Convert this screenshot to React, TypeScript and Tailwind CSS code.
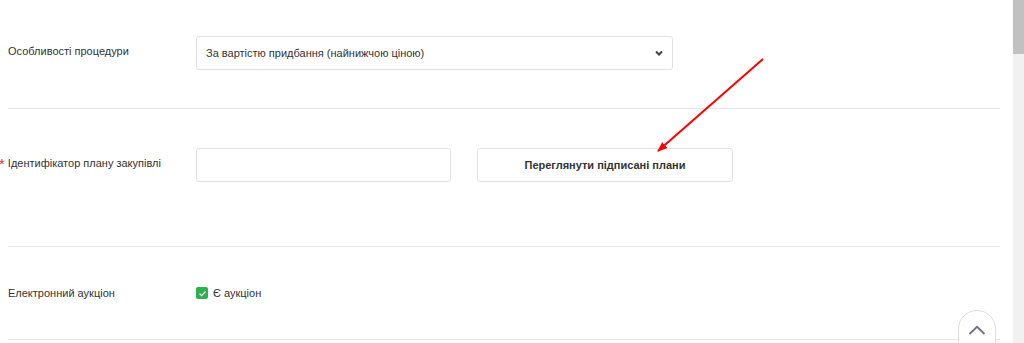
const Label = ({ children, required }: { children: React.ReactNode; required?: boolean }) => {
    return (
        <div className="w-[188px] shrink-0 pt-[6px] text-[11px] leading-[18px] text-[#333]">
            {required && <span className="-ml-[9px] mr-[3px] align-[-2px] text-[15px] leading-[0] text-[#e3342f]">*</span>}
            {children}
        </div>
    );
};

export default function App() {
    return (
        <div
            className="relative flex h-[343px] w-[1024px] overflow-hidden bg-white"
            style={{ fontFamily: '"Liberation Sans", Arial, sans-serif' }}
        >
            <div className="flex-1 pl-2 pr-[13px]">
                {/* row 1 */}
                <div className="flex items-start border-b border-[#e6e6e9] pt-[36px] pb-[38px]">
                    <Label>Особливості процедури</Label>
                    <div className="flex h-[34px] w-[477px] items-center justify-between rounded-[3px] border border-[#e1e2e6] pl-[9px] pr-[8px] text-[11px] text-[#333]">
                        <span>За вартістю придбання (найнижчою ціною)</span>
                        <svg width="10" height="8" viewBox="0 0 10 8">
                            <path d="M2 2.5 L5 5.5 L8 2.5" fill="none" stroke="#444" strokeWidth="2" />
                        </svg>
                    </div>
                </div>

                {/* row 2 */}
                <div className="flex items-start border-b border-[#e6e6e9] pt-[39px] pb-[64px]">
                    <Label required>Ідентифікатор плану закупівлі</Label>
                    <div className="flex gap-[26px]">
                        <div className="h-[34px] w-[255px] rounded-[3px] border border-[#e1e2e6]" />
                        <button className="h-[34px] w-[256px] rounded-[3px] border border-[#e1e2e6] bg-white text-[11px] font-bold text-[#333]">
                            Переглянути підписані плани
                        </button>
                    </div>
                </div>

                {/* row 3 */}
                <div className="flex h-[93px] items-center border-b border-[#e6e6e9]">
                    <div className="w-[188px] shrink-0 text-[11px] leading-[18px] text-[#333]">Електронний аукціон</div>
                    <div className="flex items-center gap-[5px] text-[11px] text-[#333]">
                        <span className="flex h-[12px] w-[12px] items-center justify-center rounded-[2px] bg-[#2bb24c]">
                            <svg width="9" height="9" viewBox="0 0 10 10">
                                <path d="M1.8 5.2 L4 7.3 L8.3 2.8" fill="none" stroke="white" strokeWidth="1.4" />
                            </svg>
                        </span>
                        <span>Є аукціон</span>
                    </div>
                </div>
            </div>

            {/* scrollbar */}
            <div className="w-[11px] bg-[#f1f1f1]">
                <div className="h-[54px] bg-[#c1c1c1]" />
            </div>

            {/* annotation arrow */}
            <svg className="pointer-events-none absolute left-0 top-0" width="1024" height="343">
                <defs>
                    <marker id="head" markerWidth="10" markerHeight="8" refX="9" refY="4" orient="auto" markerUnits="userSpaceOnUse">
                        <path d="M0 0 L10 4 L0 8 Z" fill="#ff0000" />
                    </marker>
                </defs>
                <line x1="763" y1="59" x2="658" y2="151" stroke="#ff0000" strokeWidth="2" markerEnd="url(#head)" />
            </svg>

            {/* scroll to top */}
            <div className="absolute left-[958px] top-[310px] flex h-[60px] w-[38px] justify-center rounded-[19px] border border-[#dcdde2] bg-white pt-[14px]">
                <svg width="18" height="10" viewBox="0 0 18 10">
                    <path d="M1.5 9 L9 1.8 L16.5 9" fill="none" stroke="#6b7280" strokeWidth="1.8" />
                </svg>
            </div>
        </div>
    );
}
